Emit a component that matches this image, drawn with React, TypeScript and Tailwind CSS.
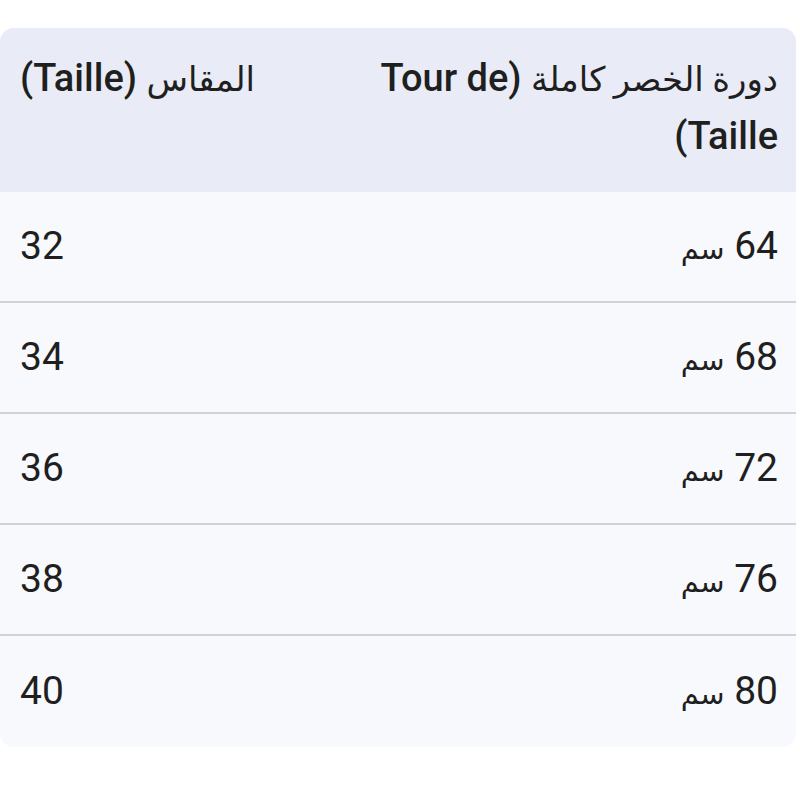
import React from 'react';

// Tableau des tailles — tour de taille (RTL)

const ROWS = [
  { cm: '64', size: '32' },
  { cm: '68', size: '34' },
  { cm: '72', size: '36' },
  { cm: '76', size: '38' },
  { cm: '80', size: '40' },
];

export default function App() {
  return (
    <div
      className="min-h-[800px] w-[800px] bg-white pt-[28px] pr-[4px]"
      style={{ fontFamily: 'Roboto, "DejaVu Sans", sans-serif' }}
    >
      <div dir="rtl" className="overflow-hidden rounded-[14px] bg-[#f8f9fc] text-[#1f1f1f]">
        {/* header */}
        <div className="grid grid-cols-[470px_1fr] bg-[#e9ecf6] pt-[22px] pb-[27px] text-[38px] font-medium leading-[57px]">
          <div className="pr-[18px] text-right">
            <span className="text-[34px] font-normal">دورة الخصر كاملة</span> (Tour de Taille)
          </div>
          <div className="pl-[20px] text-left">
            <span className="text-[34px] font-normal">المقاس</span> (Taille)
          </div>
        </div>

        {/* rows */}
        {ROWS.map((r, i) => (
          <div
            key={r.size}
            className={`grid h-[111px] grid-cols-[470px_1fr] items-center text-[39px] ${
              i < ROWS.length - 1 ? 'border-b-2 border-[#d2d3d7]' : ''
            }`}
          >
            <div className="pr-[18px] text-right">
              {r.cm} <span className="text-[29px]">سم</span>
            </div>
            <div className="pl-[20px] text-left">{r.size}</div>
          </div>
        ))}
      </div>
    </div>
  );
}
